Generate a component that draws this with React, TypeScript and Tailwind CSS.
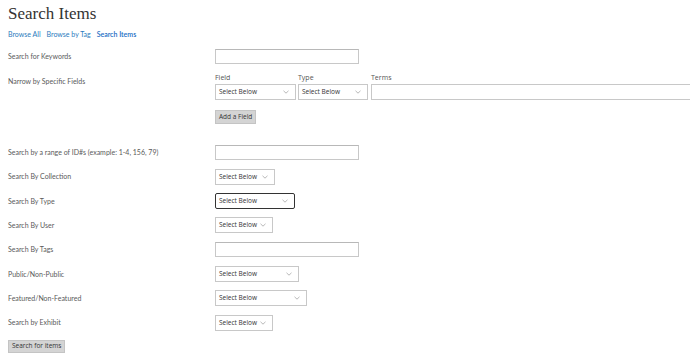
import React from 'react';

// Fake select box, drawn like the browser default in the screenshot
const SelectBox: React.FC<{ width: string; focused?: boolean }> = ({ width, focused }) => (
  <div
    className={`${width} h-[16px] flex items-center justify-between pl-[3px] pr-[6px] bg-white font-['Open_Sans',sans-serif] text-[6.5px] text-[#333] ${
      focused ? 'border-[1.5px] border-[#333] rounded-[2px]' : 'border border-[#c8c8c8]'
    }`}
  >
    <span>Select Below</span>
    <svg width="6" height="4" viewBox="0 0 6 4" className="text-[#999] shrink-0">
      <path d="M0.5 0.8 L3 3.2 L5.5 0.8" fill="none" stroke="currentColor" strokeWidth="0.7" />
    </svg>
  </div>
);

const TextBox: React.FC<{ className?: string }> = ({ className = 'w-[144px]' }) => (
  <div className={`${className} h-[15px] bg-white border border-[#c8c8c8] border-t-[#b8b8b8]`} />
);

const Label: React.FC<{ children: React.ReactNode }> = ({ children }) => (
  <div className="font-['Lato',sans-serif] text-[7px] text-[#5a5a5a]">{children}</div>
);

const GrayButton: React.FC<{ children: React.ReactNode; className?: string }> = ({ children, className = '' }) => (
  <div className={`flex w-fit items-center px-[3px] bg-[#d4d4d4] border border-[#c4c4c4] font-['Open_Sans',sans-serif] text-[6.5px] leading-none text-[#333] ${className}`}>
    {children}
  </div>
);

// Simple label + control row
const Row: React.FC<{ label: string; children: React.ReactNode }> = ({ label, children }) => (
  <div className="grid grid-cols-[207px_1fr] items-center h-[24.3px]">
    <Label>{label}</Label>
    <div className="flex">{children}</div>
  </div>
);

export default function App() {
  return (
    <div className="w-[690px] h-[363px] overflow-hidden bg-white pl-[8px] relative">
      <h1 className="font-['Liberation_Serif',serif] text-[17px] text-[#333] leading-none pt-[5px]">Search Items</h1>

      <div className="flex gap-[6px] mt-[9px] font-['Lato',sans-serif] text-[7px] text-[#2b7bbd] leading-none">
        <span>Browse All</span>
        <span>Browse by Tag</span>
        <span className="font-semibold text-[#1a6cc4]">Search Items</span>
      </div>

      <div className="mt-[6px]">
        <Row label="Search for Keywords">
          <TextBox />
        </Row>

        {/* Narrow by specific fields */}
        <div className="grid grid-cols-[207px_1fr] mt-[5px]">
          <div className="pt-[3px]">
            <Label>Narrow by Specific Fields</Label>
          </div>
          <div>
            <div className="flex gap-[2px] font-['Open_Sans',sans-serif] text-[7px] text-[#555] leading-[9px]">
              <div className="w-[81px]">Field</div>
              <div className="w-[71px]">Type</div>
              <div>Terms</div>
            </div>
            <div className="flex gap-[2px] mt-[2px]">
              <SelectBox width="w-[81px]" />
              <SelectBox width="w-[70px]" />
              <div className="ml-[1px] w-[330px] h-[16px] bg-white border border-[#c8c8c8] border-r-0" />
            </div>
            <GrayButton className="mt-[10px] h-[14px]">Add a Field</GrayButton>
          </div>
        </div>

        <div className="mt-[16px]">
          <Row label="Search by a range of ID#s (example: 1-4, 156, 79)">
            <TextBox />
          </Row>
          <Row label="Search By Collection">
            <SelectBox width="w-[60px]" />
          </Row>
          <Row label="Search By Type">
            <SelectBox width="w-[80px]" focused />
          </Row>
          <Row label="Search By User">
            <SelectBox width="w-[58px]" />
          </Row>
          <Row label="Search By Tags">
            <TextBox />
          </Row>
          <Row label="Public/Non-Public">
            <SelectBox width="w-[84px]" />
          </Row>
          <Row label="Featured/Non-Featured">
            <SelectBox width="w-[92px]" />
          </Row>
          <Row label="Search by Exhibit">
            <SelectBox width="w-[58px]" />
          </Row>
        </div>

        <GrayButton className="mt-[5px] h-[13px]">Search for items</GrayButton>
      </div>
    </div>
  );
}
